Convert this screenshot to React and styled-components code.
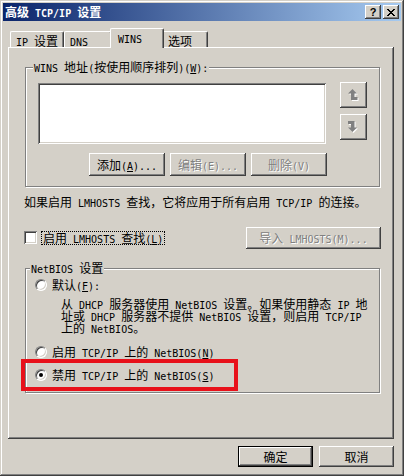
import styled, { createGlobalStyle } from 'styled-components';

const GlobalStyle = createGlobalStyle`
  html, body {
    margin: 0;
    padding: 0;
    background: #d4d0c8;
  }
  body {
    font-family: "Noto Sans CJK SC", "Noto Sans", sans-serif;
    font-size: 12px;
    line-height: 12px;
    color: #000;
  }
`;

// half-width text, SimSun style: 6px per character
const Lat = styled.span`
    font-family: "DejaVu Sans Mono", "Liberation Mono", monospace;
    font-size: 10px;
    line-height: 10px;
`;

const Key = styled(Lat)`
    text-decoration: underline;
    text-underline-offset: 1px;
`;

// "&" marks the accelerator letter, like a Windows resource string
const Txt = ({ s }) => {
    const out = [];
    let buf = '';
    let lat = null;
    const flush = () => {
        if (!buf) return;
        out.push(lat ? <Lat key={out.length}>{buf}</Lat> : <span key={out.length}>{buf}</span>);
        buf = '';
    };
    for (let i = 0; i < s.length; i++) {
        let c = s[i];
        if (c === '&') {
            c = s[++i];
            flush();
            out.push(<Key key={out.length}>{c}</Key>);
            lat = null;
            continue;
        }
        const isLat = c.charCodeAt(0) < 128;
        if (lat !== null && isLat !== lat) flush();
        lat = isLat;
        buf += c;
    }
    flush();
    return <span>{out}</span>;
};

const raised = `
    box-shadow: inset -1px -1px #404040, inset 1px 1px #fff, inset -2px -2px #808080, inset 2px 2px #d4d0c8;
`;

const sunken = `
    box-shadow: inset 1px 1px #808080, inset -1px -1px #fff, inset 2px 2px #404040, inset -2px -2px #d4d0c8;
`;

const Window = styled.div`
    width: 404px;
    height: 476px;
    box-sizing: border-box;
    padding: 3px;
    display: flex;
    flex-direction: column;
    background: #d4d0c8;
    box-shadow: inset -1px -1px #404040, inset 1px 1px #d4d0c8, inset -2px -2px #808080, inset 2px 2px #fff;
`;

const TitleBar = styled.div`
    height: 18px;
    display: flex;
    align-items: center;
    padding: 0 2px;
    background: linear-gradient(to right, #0a246a, #a6caf0);
    color: #fff;
    font-weight: bold;
`;

const TitleText = styled.div`
    flex: 1;
    padding-top: 1px;
`;

const CapButtons = styled.div`
    display: flex;
    gap: 2px;
`;

const CapButton = styled.div`
    width: 16px;
    height: 14px;
    display: flex;
    align-items: center;
    justify-content: center;
    background: #d4d0c8;
    color: #000;
    font-family: "Liberation Sans", sans-serif;
    font-size: 11px;
    font-weight: bold;
    ${raised}
`;

const Content = styled.div`
    flex: 1;
    display: flex;
    flex-direction: column;
    padding: 7px 7px 0 5px;
`;

const TabRow = styled.div`
    height: 19px;
    display: flex;
    align-items: flex-end;
    padding-left: 2px;
    position: relative;
    z-index: 1;
`;

const Tab = styled.div`
    width: ${(p) => p.$w}px;
    height: ${(p) => (p.$active ? 20 : 16)}px;
    margin: 0 ${(p) => (p.$active ? -2 : 0)}px ${(p) => (p.$active ? -1 : 0)}px;
    padding: ${(p) => (p.$active ? '3px 0 0 7px' : '3px 0 0 5px')};
    box-sizing: border-box;
    background: #d4d0c8;
    border: 1px solid;
    border-color: #fff #404040 transparent #fff;
    border-bottom: none;
    border-radius: 2px 2px 0 0;
    box-shadow: inset -1px 0 #808080;
    position: relative;
    z-index: ${(p) => (p.$active ? 2 : 0)};
`;

const Panel = styled.div`
    height: 392px;
    box-sizing: border-box;
    padding: 14px 14px 0 16px;
    display: flex;
    flex-direction: column;
    box-shadow: inset -1px -1px #404040, inset 1px 1px #fff, inset -2px -2px #808080;
`;

const Group = styled.fieldset`
    margin: 0 0 0 1px;
    padding: ${(p) => p.$pad};
    min-width: 0;
    border: 1px solid #808080;
    box-shadow: inset 1px 1px #fff, 1px 1px #fff;
`;

const Legend = styled.legend`
    margin-left: -5px;
    padding: 0 1px;
    height: 12px;
    line-height: 12px;
    background: #d4d0c8;
`;

const ListRow = styled.div`
    display: flex;
    align-items: flex-start;
    gap: 14px;
`;

const ListBox = styled.div`
    width: 288px;
    height: 61px;
    margin-top: 1px;
    background: #fff;
    ${sunken}
`;

const ArrowCol = styled.div`
    display: flex;
    flex-direction: column;
    gap: 6px;
`;

const ArrowButton = styled.div`
    width: 27px;
    height: 26px;
    display: flex;
    align-items: center;
    justify-content: center;
    ${raised}
`;

const ButtonRow = styled.div`
    width: 289px;
    margin-top: 9px;
    display: flex;
    justify-content: flex-end;
    gap: 5px;
`;

const Button = styled.div`
    width: ${(p) => p.$w}px;
    height: ${(p) => p.$h}px;
    flex: none;
    display: flex;
    align-items: center;
    justify-content: center;
    box-sizing: border-box;
    padding-top: 1px;
    white-space: pre;
    color: ${(p) => (p.$disabled ? '#808080' : '#000')};
    text-shadow: ${(p) => (p.$disabled ? '1px 1px 0 #fff' : 'none')};
    ${raised}
`;

const DefaultButton = styled(Button)`
    box-shadow: inset 0 0 0 1px #000, inset -2px -2px #404040, inset 2px 2px #fff, inset -3px -3px #808080;
`;

const Note = styled.div`
    height: 12px;
    margin-top: 9px;
    white-space: nowrap;
`;

const CheckRow = styled.div`
    height: 23px;
    margin-top: 18px;
    display: flex;
    align-items: center;
    justify-content: space-between;
`;

const CheckWrap = styled.div`
    display: flex;
    align-items: center;
`;

const CheckBox = styled.div`
    width: 13px;
    height: 13px;
    background: #fff;
    ${sunken}
`;

const FocusLabel = styled.div`
    margin-left: 4px;
    padding: 0 1px;
    height: 14px;
    box-sizing: border-box;
    border: 1px dotted #000;
`;

const NetGroup = styled(Group)`
    margin-top: 13px;
`;

const RadioRow = styled.div`
    display: flex;
    align-items: center;
    height: 14px;
    margin-top: ${(p) => p.$top || 0}px;
`;

const Radio = styled.div`
    width: 12px;
    height: 12px;
    flex: none;
    box-sizing: border-box;
    border-radius: 50%;
    border: 1px solid;
    border-color: #808080 #fff #fff #808080;
    background: #fff;
    box-shadow: inset 1px 1px #404040, inset -1px -1px #d4d0c8;
    display: flex;
    align-items: center;
    justify-content: center;

    &::after {
        content: '';
        width: 4px;
        height: 4px;
        border-radius: 50%;
        background: ${(p) => (p.$checked ? '#000' : 'transparent')};
    }
`;

const RadioLabel = styled.div`
    margin-left: 5px;
    height: 12px;
`;

const Desc = styled.div`
    margin: 6px 0 0 26px;
    white-space: nowrap;
`;

const DescLine = styled.div`
    height: 12px;
`;

// red annotation frame drawn round the chosen option
const Highlight = styled.div`
    width: 217px;
    height: 32px;
    box-sizing: border-box;
    margin-left: -14px;
    padding-left: 10px;
    border: 4px solid #e8111a;
    display: flex;
    align-items: center;
`;

const Footer = styled.div`
    margin-top: 7px;
    display: flex;
    justify-content: flex-end;
    gap: 6px;
`;

const CloseIcon = () => (
    <svg width="8" height="7" viewBox="0 0 8 7">
        <path d="M0 0h2v1h1v1h2V1h1V0h2v1H7v1H6v1H5v1h1v1h1v1h1v1H6V6H5V5H3v1H2v1H0V6h1V5h1V4h1V3H2V2H1V1H0z" fill="#000" />
    </svg>
);

const UpIcon = () => (
    <svg width="11" height="13" viewBox="0 0 11 13">
        <path d="M4.5 0L9 4.5H6.5V8H9.5V11H3V4.5H0Z" fill="#fff" transform="translate(1 1)" />
        <path d="M4.5 0L9 4.5H6.5V8H9.5V11H3V4.5H0Z" fill="#808080" />
    </svg>
);

const DownIcon = () => (
    <svg width="11" height="13" viewBox="0 0 11 13">
        <path d="M0 0H6.5V6.5H9L4.5 11L0 6.5H3V3H0Z" fill="#fff" transform="translate(1 1)" />
        <path d="M0 0H6.5V6.5H9L4.5 11L0 6.5H3V3H0Z" fill="#808080" />
    </svg>
);

const tabs = [
    { label: 'IP 设置', w: 54 },
    { label: 'DNS', w: 48 },
    { label: 'WINS', w: 54, active: true },
    { label: '选项', w: 46 },
];

const App = () => (
    <>
        <GlobalStyle />
        <Window>
            <TitleBar>
                <TitleText><Txt s="高级 TCP/IP 设置" /></TitleText>
                <CapButtons>
                    <CapButton>?</CapButton>
                    <CapButton><CloseIcon /></CapButton>
                </CapButtons>
            </TitleBar>

            <Content>
                <TabRow>
                    {tabs.map((t) => (
                        <Tab key={t.label} $w={t.w} $active={t.active}>
                            <Txt s={t.label} />
                        </Tab>
                    ))}
                </TabRow>

                <Panel>
                    <Group $pad="9px 12px 10px 12px">
                        <Legend><Txt s="WINS 地址(按使用顺序排列)(&W):" /></Legend>
                        <ListRow>
                            <ListBox />
                            <ArrowCol>
                                <ArrowButton><UpIcon /></ArrowButton>
                                <ArrowButton><DownIcon /></ArrowButton>
                            </ArrowCol>
                        </ListRow>
                        <ButtonRow>
                            <Button $w={76} $h={23}><Txt s="添加(&A)..." /></Button>
                            <Button $w={76} $h={23} $disabled><Txt s="编辑(E)..." /></Button>
                            <Button $w={76} $h={23} $disabled><Txt s="删除(V)" /></Button>
                        </ButtonRow>
                    </Group>

                    <Note><Txt s="如果启用 LMHOSTS 查找，它将应用于所有启用 TCP/IP 的连接。" /></Note>

                    <CheckRow>
                        <CheckWrap>
                            <CheckBox />
                            <FocusLabel><Txt s="启用 LMHOSTS 查找(&L)" /></FocusLabel>
                        </CheckWrap>
                        <Button $w={135} $h={22} $disabled style={{ marginRight: -1 }}>
                            <Txt s="导入 LMHOSTS(M)..." />
                        </Button>
                    </CheckRow>

                    <NetGroup $pad="4px 9px 1px 9px">
                        <Legend><Txt s="NetBIOS 设置" /></Legend>
                        <RadioRow>
                            <Radio />
                            <RadioLabel><Txt s="默认(&F):" /></RadioLabel>
                        </RadioRow>
                        <Desc>
                            <DescLine><Txt s="从 DHCP 服务器使用 NetBIOS 设置。如果使用静态 IP 地" /></DescLine>
                            <DescLine><Txt s="址或 DHCP 服务器不提供 NetBIOS 设置，则启用 TCP/IP" /></DescLine>
                            <DescLine><Txt s="上的 NetBIOS。" /></DescLine>
                        </Desc>
                        <RadioRow $top={11}>
                            <Radio />
                            <RadioLabel><Txt s="启用 TCP/IP 上的 NetBIOS(&N)" /></RadioLabel>
                        </RadioRow>
                        <Highlight>
                            <Radio $checked />
                            <RadioLabel><Txt s="禁用 TCP/IP 上的 NetBIOS(&S)" /></RadioLabel>
                        </Highlight>
                    </NetGroup>
                </Panel>

                <Footer>
                    <DefaultButton $w={75} $h={21}>确定</DefaultButton>
                    <Button $w={75} $h={21}>取消</Button>
                </Footer>
            </Content>
        </Window>
    </>
);

export default App;
